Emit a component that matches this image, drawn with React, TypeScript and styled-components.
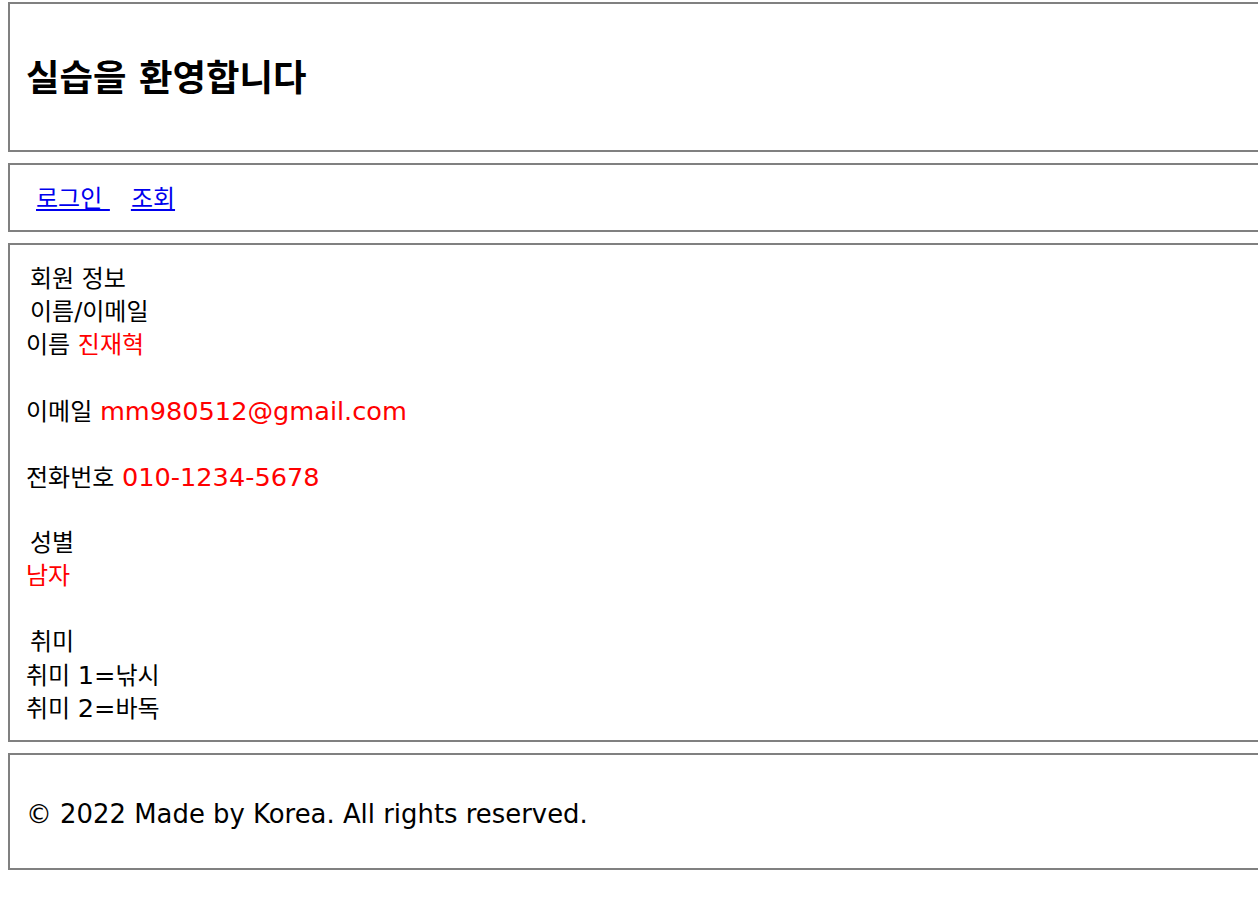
import React from 'react';
import styled, { createGlobalStyle } from 'styled-components';

const GlobalStyle = createGlobalStyle`
  html, body {
    overflow-x: hidden;
  }

  body {
    margin: 2px 0 0 8px;
    background: #ffffff;
    color: #000000;
    font-family: 'DejaVu Sans', 'Noto Sans CJK KR', sans-serif;
    font-size: 24px;
    line-height: 33px;
  }
`;

const Page = styled.div`
  display: flex;
  flex-direction: column;
  gap: 11px;
`;

const Box = styled.section<{ $padTop: number; $padBottom: number }>`
  width: calc(100% + 40px);
  box-sizing: border-box;
  border: 2px solid #808080;
  padding: ${(props) => props.$padTop}px 16px ${(props) => props.$padBottom}px;
`;

const Title = styled.h1`
  margin: 0;
  font-size: 36.4px;
  line-height: 46px;
  font-weight: bold;
`;

const Nav = styled.nav`
  display: flex;
  gap: 21px;
  padding-left: 10px;
`;

const NavLink = styled.a`
  color: #0000ee;
  text-decoration: underline;
  white-space: pre;
`;

const Line = styled.div<{ $indent?: boolean }>`
  height: 33px;
  white-space: nowrap;
  padding-left: ${(props) => (props.$indent ? '4px' : '0')};
`;

const Value = styled.span<{ $latin?: boolean }>`
  color: #ff0000;
  font-size: ${(props) => (props.$latin ? '25.6px' : 'inherit')};
`;

const Latin = styled.span`
  font-size: 25.6px;
`;

const Copyright = styled.div`
  height: 33px;
  font-size: 25.9px;
  white-space: nowrap;
`;

export default function App() {
  return (
    <>
      <GlobalStyle />
      <Page>
        <Box $padTop={52} $padBottom={48}>
          <Title>실습을 환영합니다</Title>
        </Box>
        <Box $padTop={18} $padBottom={14}>
          <Nav>
            <NavLink href="#">로그인 </NavLink>
            <NavLink href="#">조회</NavLink>
          </Nav>
        </Box>
        <Box $padTop={18} $padBottom={15}>
          <Line $indent>회원 정보</Line>
          <Line $indent>이름/이메일</Line>
          <Line>
            이름 <Value>진재혁</Value>
          </Line>
          <Line />
          <Line>
            이메일 <Value $latin>mm980512@gmail.com</Value>
          </Line>
          <Line />
          <Line>
            전화번호 <Value $latin>010-1234-5678</Value>
          </Line>
          <Line />
          <Line $indent>성별</Line>
          <Line>
            <Value>남자</Value>
          </Line>
          <Line />
          <Line $indent>취미</Line>
          <Line>
            취미 <Latin>1=</Latin>낚시
          </Line>
          <Line>
            취미 <Latin>2=</Latin>바독
          </Line>
        </Box>
        <Box $padTop={43} $padBottom={37}>
          <Copyright>© 2022 Made by Korea. All rights reserved.</Copyright>
        </Box>
      </Page>
    </>
  );
}
